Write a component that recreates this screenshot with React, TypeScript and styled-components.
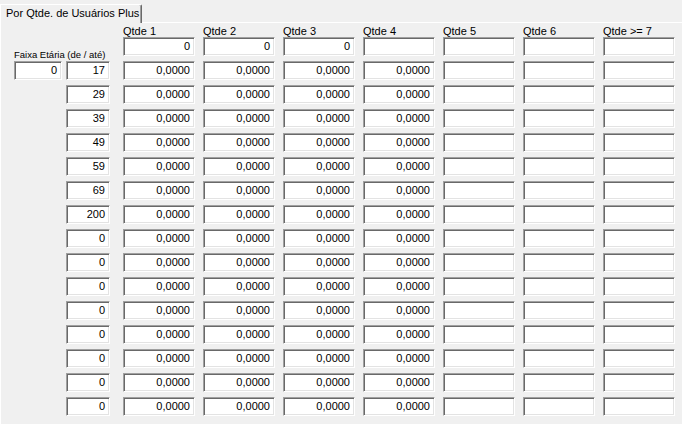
import React from "react";
import styled, { createGlobalStyle } from "styled-components";

const Global = createGlobalStyle`
  html, body { margin: 0; padding: 0; background: #f0f0f0; }
  body { font-family: "Liberation Sans", Arial, sans-serif; font-size: 11px; color: #000; }
`;

const Window = styled.div`
  width: 682px;
  height: 424px;
  background: #f0f0f0;
  overflow: hidden;
  display: flex;
  flex-direction: column;
`;

const TabStrip = styled.div`
  height: 22px;
  display: flex;
  align-items: flex-end;
  flex-shrink: 0;
`;

const Tab = styled.div`
  height: 19px;
  width: 142px;
  box-sizing: border-box;
  border-top: 1px solid #ffffff;
  border-left: 1px solid #ffffff;
  border-right: 1px solid #696969;
  box-shadow: inset -1px 0 #a0a0a0;
  border-top-right-radius: 2px;
  padding-left: 5px;
  line-height: 16px;
  font-size: 11px;
  background: #f0f0f0;
  position: relative;
  margin-bottom: -1px;
  z-index: 1;
`;

const Panel = styled.div`
  flex: 1;
  border-top: 1px solid #ffffff;
  border-left: 1px solid #ffffff;
  box-sizing: border-box;
  padding-left: 13px;
`;

const Grid = styled.div`
  display: grid;
  grid-template-columns: 52px 57px repeat(7, 80px);
  grid-template-rows: 14px repeat(16, 24px);
`;

const HeadLabel = styled.div<{ $col: number }>`
  grid-column: ${(p) => p.$col};
  grid-row: 1;
  align-self: end;
  line-height: 12px;
  font-size: 11px;
  white-space: nowrap;
`;

const AgeLabel = styled.div`
  grid-column: 1 / span 2;
  grid-row: 2;
  align-self: end;
  font-size: 9.5px;
  line-height: 10px;
  white-space: nowrap;
  margin-bottom: 1px;
`;

const Field = styled.div<{ $col: number; $row: number; $w: number }>`
  grid-column: ${(p) => p.$col};
  grid-row: ${(p) => p.$row};
  align-self: start;
  width: ${(p) => p.$w}px;
  height: 19px;
  box-sizing: border-box;
  background: #ffffff;
  border-style: solid;
  border-width: 1px;
  border-color: #a0a0a0 #ffffff #ffffff #a0a0a0;
  box-shadow: inset 1px 1px #696969, inset -1px -1px #e3e3e3;
  text-align: right;
  padding-right: 4px;
  line-height: 17px;
  font-size: 11px;
  white-space: nowrap;
  overflow: hidden;
`;

const heads = ["Qtde 1", "Qtde 2", "Qtde 3", "Qtde 4", "Qtde 5", "Qtde 6", "Qtde >= 7"];
const ages = ["17", "29", "39", "49", "59", "69", "200", "0", "0", "0", "0", "0", "0", "0", "0"];

export default function App() {
  const cells: React.ReactNode[] = [];
  for (let c = 0; c < 7; c++) {
    cells.push(
      <Field key={`r0-${c}`} $col={c + 3} $row={2} $w={72}>
        {c < 3 ? "0" : ""}
      </Field>
    );
  }
  ages.forEach((a, i) => {
    const row = i + 3;
    if (i === 0) {
      cells.push(
        <Field key="age-from" $col={1} $row={row} $w={48}>
          0
        </Field>
      );
    }
    cells.push(
      <Field key={`age-${i}`} $col={2} $row={row} $w={44}>
        {a}
      </Field>
    );
    for (let c = 0; c < 7; c++) {
      cells.push(
        <Field key={`r${row}-${c}`} $col={c + 3} $row={row} $w={72}>
          {c < 4 ? "0,0000" : ""}
        </Field>
      );
    }
  });

  return (
    <Window>
      <Global />
      <TabStrip>
        <Tab>Por Qtde. de Usuários Plus</Tab>
      </TabStrip>
      <Panel>
        <Grid>
          {heads.map((h, i) => (
            <HeadLabel key={h} $col={i + 3}>
              {h}
            </HeadLabel>
          ))}
          <AgeLabel>Faixa Etária (de / até)</AgeLabel>
          {cells}
        </Grid>
      </Panel>
    </Window>
  );
}
